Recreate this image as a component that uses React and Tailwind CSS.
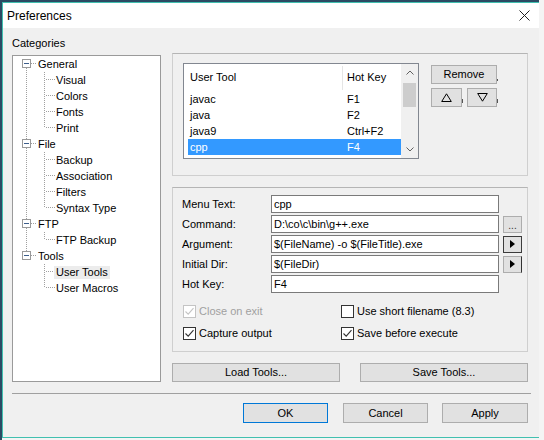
import React from "react";

const TREE = [
  { label: "General", children: ["Visual", "Colors", "Fonts", "Print"] },
  { label: "File", children: ["Backup", "Association", "Filters", "Syntax Type"] },
  { label: "FTP", children: ["FTP Backup"] },
  { label: "Tools", children: ["User Tools", "User Macros"] },
];

const TOOLS = [
  { name: "javac", key: "F1" },
  { name: "java", key: "F2" },
  { name: "java9", key: "Ctrl+F2" },
  { name: "cpp", key: "F4", selected: true },
];

const FIELDS = [
  { label: "Menu Text:", value: "cpp" },
  { label: "Command:", value: "D:\\co\\c\\bin\\g++.exe", side: "browse" },
  { label: "Argument:", value: "$(FileName) -o $(FileTitle).exe", side: "arrowFocus" },
  { label: "Initial Dir:", value: "$(FileDir)", side: "arrow" },
  { label: "Hot Key:", value: "F4" },
];

const DOT = "#a0a0a0";

function RootGutter({ first, last }) {
  return (
    <svg width="24" height="16" className="shrink-0">
      {!first && <line x1="13.5" y1="0" x2="13.5" y2="3" stroke={DOT} strokeDasharray="1 1" />}
      {!last && <line x1="13.5" y1="12" x2="13.5" y2="16" stroke={DOT} strokeDasharray="1 1" />}
      <line x1="18" y1="7.5" x2="24" y2="7.5" stroke={DOT} strokeDasharray="1 1" />
      <rect x="9.5" y="3.5" width="8" height="8" fill="#fff" stroke="#999" />
      <line x1="11" y1="7.5" x2="16" y2="7.5" stroke="#3d5f8c" />
    </svg>
  );
}

function ChildGutter({ parentLast, last }) {
  return (
    <svg width="43" height="16" className="shrink-0">
      {!parentLast && <line x1="13.5" y1="0" x2="13.5" y2="16" stroke={DOT} strokeDasharray="1 1" />}
      <line x1="31.5" y1="0" x2="31.5" y2={last ? 8 : 16} stroke={DOT} strokeDasharray="1 1" />
      <line x1="33" y1="7.5" x2="42" y2="7.5" stroke={DOT} strokeDasharray="1 1" />
    </svg>
  );
}

function CheckBox({ checked, disabled, label }) {
  return (
    <div className="flex items-center h-[13px]">
      <div
        className={`w-[13px] h-[13px] border flex items-center justify-center bg-white ${
          disabled ? "border-[#c4c4c4]" : "border-[#333333]"
        }`}
      >
        {checked && (
          <svg width="11" height="11" viewBox="0 0 11 11">
            <path d="M1.5 5.5 L4.2 8.2 L9.5 2.2" fill="none" stroke={disabled ? "#c4c4c4" : "#333"} strokeWidth="1.1" />
          </svg>
        )}
      </div>
      <span className={`ml-[3px] text-[11px] leading-[13px] ${disabled ? "text-[#a0a0a0]" : "text-black"}`}>
        {label}
      </span>
    </div>
  );
}

function Btn({ children, className = "" }) {
  return (
    <div
      className={`h-[19px] border bg-[#e1e1e1] flex items-center justify-center text-[11px] text-black ${className}`}
    >
      {children}
    </div>
  );
}

function SideButton({ kind }) {
  if (!kind) return null;
  const border =
    kind === "arrowFocus"
      ? "border-[#3c3c3c]"
      : kind === "arrow"
      ? "border-[#adadad] border-r-[#333333]"
      : "border-[#adadad]";
  return (
    <div className={`ml-[4px] w-[19px] h-[17px] border bg-[#e1e1e1] flex items-center justify-center ${border}`}>
      {kind === "browse" ? (
        <span className="text-[10px] leading-[10px] mt-[4px] text-[#333]">...</span>
      ) : (
        <svg width="5" height="8" viewBox="0 0 5 8">
          <path d="M0 0 L5 4 L0 8 Z" fill="#000" />
        </svg>
      )}
    </div>
  );
}

export default function App() {
  return (
    <div className="w-[544px] h-[440px] bg-[#f4f4f4] flex overflow-hidden [font-family:'Liberation_Sans',Arial,sans-serif]">
      <div className="w-[2px] h-full bg-[#2c4a63] shrink-0" />
      <div className="flex flex-col w-[537px] shrink-0">
        <div className="h-[2px] bg-[#2c4a63]" />
        <div className="h-[436px] border-t border-l border-b border-[#41c0b0] flex flex-col">
          {/* Title bar */}
          <div className="h-[25px] bg-white flex items-center justify-between pl-[4px] pr-[9px]">
            <span className="text-[12px] text-black">Preferences</span>
            <svg width="11" height="11" viewBox="0 0 11 11">
              <path d="M0.5 0.5 L10.5 10.5 M10.5 0.5 L0.5 10.5" stroke="#222" strokeWidth="1" />
            </svg>
          </div>

          {/* Body */}
          <div className="flex-1 bg-[#f0f0f0] pl-[9px] pt-[8px] flex flex-col">
            <div className="flex">
              {/* Categories */}
              <div className="w-[149px] shrink-0 flex flex-col">
                <div className="h-[17px] text-[11px] leading-[14px] text-black">Categories</div>
                <div className="mt-[2px] h-[327px] border border-[#9a9a9a] bg-white flex flex-col">
                  {TREE.map((node, i) => {
                    const first = i === 0;
                    const last = i === TREE.length - 1;
                    return (
                      <React.Fragment key={node.label}>
                        <div className="h-[16px] flex items-center">
                          <RootGutter first={first} last={last} />
                          <span className="text-[11px] leading-[13px] px-[1px] text-black">{node.label}</span>
                        </div>
                        {node.children.map((c, j) => (
                          <div key={c} className="h-[16px] flex items-center">
                            <ChildGutter parentLast={last} last={j === node.children.length - 1} />
                            <span
                              className={`text-[11px] leading-[13px] px-[2px] -ml-[2px] text-black ${
                                c === "User Tools" ? "bg-[#ececec]" : ""
                              }`}
                            >
                              {c}
                            </span>
                          </div>
                        ))}
                      </React.Fragment>
                    );
                  })}
                </div>
              </div>

              {/* Right side */}
              <div className="ml-[11px] w-[356px] shrink-0 pt-[17px] flex flex-col">
                {/* Tool list group */}
                <div className="h-[123px] border border-[#cfcfcf] border-t-[#b5b5b5] pl-[10px] pt-[9px] flex">
                  <div className="w-[236px] h-[96px] border border-[#828790] bg-white flex">
                    <div className="flex-1 pl-[4px] flex flex-col overflow-hidden">
                      <div className="h-[27px] shrink-0 flex items-center text-[11px] text-black">
                        <span className="w-[154px] pl-[2px]">User Tool</span>
                        <span className="w-[1px] h-[24px] bg-[#e5e5e5]" />
                        <span className="pl-[4px]">Hot Key</span>
                      </div>
                      {TOOLS.map((t) => (
                        <div
                          key={t.name}
                          className={`h-[16px] shrink-0 flex items-center text-[11px] ${
                            t.selected ? "bg-[#3399ff] text-white" : "text-black"
                          }`}
                        >
                          <span className="w-[155px] pl-[2px]">{t.name}</span>
                          <span className="pl-[4px]">{t.key}</span>
                        </div>
                      ))}
                    </div>
                    <div className="w-[17px] bg-[#f0f0f0] flex flex-col items-center shrink-0">
                      <div className="h-[17px] flex items-center justify-center">
                        <svg width="8" height="5" viewBox="0 0 8 5">
                          <path d="M0.5 4.5 L4 1 L7.5 4.5" fill="none" stroke="#606060" />
                        </svg>
                      </div>
                      <div className="mt-[2px] w-[13px] h-[24px] bg-[#cdcdcd]" />
                      <div className="flex-1" />
                      <div className="h-[17px] flex items-center justify-center">
                        <svg width="8" height="5" viewBox="0 0 8 5">
                          <path d="M0.5 0.5 L4 4 L7.5 0.5" fill="none" stroke="#606060" />
                        </svg>
                      </div>
                    </div>
                  </div>

                  <div className="ml-[12px] pt-[2px] flex flex-col">
                    <div className="flex items-end">
                      <Btn className="w-[66px] h-[17px] border-[#adadad]">Remove</Btn>
                      <span className="w-[1px] h-[2px] bg-[#555] mb-[3px]" />
                    </div>
                    <div className="mt-[4px] flex items-end">
                      <Btn className="w-[31px] h-[17px] border-[#adadad]">
                        <svg width="11" height="9" viewBox="0 0 11 9">
                          <path d="M5.5 0.8 L10.3 8.5 L0.7 8.5 Z" fill="none" stroke="#000" />
                        </svg>
                      </Btn>
                      <span className="w-[1px] h-[4px] bg-[#555] mb-[4px]" />
                      <Btn className="ml-[4px] w-[30px] h-[17px] border-[#adadad]">
                        <svg width="11" height="9" viewBox="0 0 11 9">
                          <path d="M0.7 0.5 L10.3 0.5 L5.5 8.2 Z" fill="none" stroke="#000" />
                        </svg>
                      </Btn>
                      <span className="w-[1px] h-[4px] bg-[#555] mb-[4px]" />
                    </div>
                  </div>
                </div>

                {/* Tool details group */}
                <div className="mt-[11px] h-[165px] border border-[#cfcfcf] border-t-[#b5b5b5] pl-[9px] pt-[7px] flex flex-col">
                  <div className="flex flex-col gap-[2px]">
                    {FIELDS.map((f) => (
                      <div key={f.label} className="h-[18px] flex items-center">
                        <span className="w-[89px] text-[11px] text-black">{f.label}</span>
                        <div className="w-[228px] h-[18px] border border-[#7a7a7a] bg-white flex items-center pl-[2px] text-[11px] text-black">
                          {f.value}
                        </div>
                        <SideButton kind={f.side} />
                      </div>
                    ))}
                  </div>
                  <div className="mt-[12px] ml-[1px] flex">
                    <div className="w-[158px] flex flex-col gap-[9px]">
                      <CheckBox checked disabled label="Close on exit" />
                      <CheckBox checked label="Capture output" />
                    </div>
                    <div className="flex flex-col gap-[9px]">
                      <CheckBox label="Use short filename (8.3)" />
                      <CheckBox checked label="Save before execute" />
                    </div>
                  </div>
                </div>

                <div className="mt-[11px] flex justify-between">
                  <Btn className="w-[168px] border-[#adadad]">Load Tools...</Btn>
                  <Btn className="w-[168px] border-[#adadad]">Save Tools...</Btn>
                </div>
              </div>
            </div>

            <div className="mt-[11px] w-[519px] h-[1px] bg-[#a0a0a0]" />

            <div className="mt-[9px] ml-[231px] flex">
              <Btn className="w-[85px] h-[20px] border-[#0078d7]">OK</Btn>
              <Btn className="ml-[15px] w-[85px] h-[20px] border-[#adadad]">Cancel</Btn>
              <Btn className="ml-[14px] w-[86px] h-[20px] border-[#adadad]">Apply</Btn>
            </div>
          </div>
        </div>
      </div>
    </div>
  );
}
